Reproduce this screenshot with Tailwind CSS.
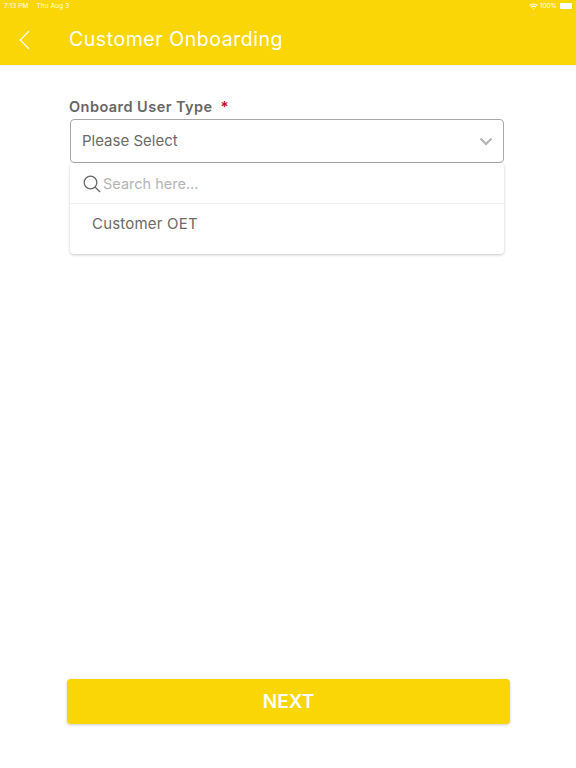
<!DOCTYPE html>
<html>

<head>
    <title>Customer Onboarding</title>
    <script src="https://cdn.jsdelivr.net/npm/@tailwindcss/browser@4"></script>
</head>

<body class="bg-white h-screen overflow-hidden font-['Inter',sans-serif]">
    <div class="h-[768px] flex flex-col">
        <!-- header -->
        <div class="h-[65px] bg-[#fbd606] shadow-[0_1px_1px_rgba(0,0,0,0.06)] flex flex-col text-white">
            <div class="h-[11px] pt-[1px] flex items-center justify-between pl-[4px] pr-[4px] text-[6.500px] leading-none">
                <div class="flex gap-[8px] tracking-[0.1px]"><span>7:13 PM</span><span>Thu Aug 3</span></div>
                <div class="flex items-center gap-[2px]">
                    <svg width="9" height="7" viewBox="0 0 18 14" fill="none" stroke="white" stroke-width="2.400">
                        <path d="M1 5c4.500-4 11.500-4 16 0M4 8.500c3-2.500 7-2.500 10 0" />
                        <circle cx="9" cy="12" r="1.500" fill="white" stroke="none" />
                    </svg>
                    <span>100%</span>
                    <div class="w-[12px] h-[6px] ml-[1px] bg-white rounded-[1px]"></div>
                </div>
            </div>
            <div class="flex-1 flex items-center pl-[19px] pt-[4px]">
                <svg width="11" height="20" viewBox="0 0 11 20" fill="none" stroke="white" stroke-width="1.100" class="mr-[39px]">
                    <path d="M10 1 1.200 10 10 19" />
                </svg>
                <span class="text-[19.500px] leading-none tracking-[0.55px]">Customer Onboarding</span>
            </div>
        </div>

        <!-- form -->
        <div class="flex-1 flex flex-col pl-[69px] pr-[72px] pt-[32px]">
            <div class="h-[22px] pb-[2px] flex items-center gap-[8px] text-[14.500px] font-semibold tracking-[0.45px] text-[#666666]">
                <span>Onboard User Type</span><span class="text-[#d0021b] text-[15px]">*</span>
            </div>
            <div class="ml-[1px] h-[44px] border border-[#a8a8a8] rounded-[4px] flex items-center justify-between pl-[11px] pr-[10px] text-[15px] text-[#6a6a6a]">
                <span>Please Select</span>
                <svg width="14" height="9" viewBox="0 0 14 9" fill="none" stroke="#b0b0b0" stroke-width="2">
                    <path d="M1.500 1.500 7 7l5.500-5.500" />
                </svg>
            </div>
            <div class="ml-[1px] h-[91px] bg-white rounded-[4px] shadow-[0_1px_3px_rgba(0,0,0,0.22)]">
                <div class="h-[41px] pt-[1px] border-b border-[#efefef] flex items-center pl-[13px] gap-[2px] text-[14.500px] text-[#b4b4b4]">
                    <svg width="18" height="18" viewBox="0 0 18 18" fill="none" stroke="#666666" stroke-width="1.300">
                        <circle cx="7.500" cy="7.500" r="6.300" />
                        <path d="m12 12 5 5" />
                    </svg>
                    <span>Search here...</span>
                </div>
                <div class="pl-[22px] pt-[10px] text-[15px] tracking-[0.2px] leading-[20px] text-[#6a6a6a]">Customer OET</div>
            </div>

            <div class="mt-auto mb-[44px] -ml-[2px] -mr-[6px] h-[45px] pt-[1px] bg-[#fbd606] rounded-[4px] shadow-[0_1px_3px_rgba(0,0,0,0.2)] flex items-center justify-center text-white text-[19px] font-semibold">NEXT</div>
        </div>
    </div>
</body>

</html>
